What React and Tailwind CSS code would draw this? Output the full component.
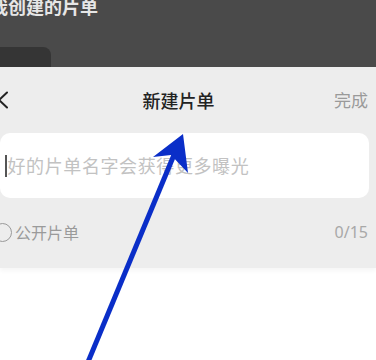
export default function App() {
  return (
    <div className="relative w-[376px] h-[360px] overflow-hidden bg-white" style={{ fontFamily: '"Noto Sans CJK SC", "Noto Sans", sans-serif' }}>
      {/* dimmed page behind the sheet */}
      <div className="h-[67px] bg-[#4a4a4a] flex flex-col">
        <div className="ml-[-10px] mt-[-5px] text-[18px] leading-[22px] font-bold text-[#e6e6e6]">我创建的片单</div>
        <div className="mt-auto w-[51px] h-[20px] bg-[#353535] rounded-tr-[8px]"></div>
      </div>

      {/* sheet */}
      <div className="h-[201px] bg-[#ededed] flex flex-col shadow-[0_3px_4px_rgba(0,0,0,0.04)]">
        <div className="h-[66px] flex items-center justify-between pr-[8px]">
          <svg width="14" height="18" viewBox="0 0 14 18" className="ml-[-5px]">
            <path d="M12 1.5 L4 9 L12 16.5" fill="none" stroke="#222" strokeWidth="2" strokeLinecap="round" strokeLinejoin="round" />
          </svg>
          <div className="text-[18px] font-medium text-[#222] ml-[14px]">新建片单</div>
          <div className="text-[17px] text-[#9a9a9a]">完成</div>
        </div>
        <div className="mr-[7px] h-[65px] bg-white rounded-[10px] flex items-center pl-[5px]">
          <div className="w-[1.5px] h-[22px] bg-[#555]"></div>
          <div className="ml-[1px] text-[18px] tracking-[0.6px] text-[#c2c2c2]">好的片单名字会获得更多曝光</div>
        </div>
        <div className="flex items-center justify-between mt-[22px] pr-[8px]">
          <div className="flex items-center">
            <div className="ml-[-7px] w-[19px] h-[19px] rounded-full border-[1.5px] border-[#9a9a9a]"></div>
            <div className="ml-[3px] text-[16px] text-[#9a9a9a]">公开片单</div>
          </div>
          <div className="text-[16px] text-[#a8a8a8]" style={{ fontFamily: '"Noto Sans", sans-serif' }}>0/15</div>
        </div>
      </div>

      {/* annotation arrow */}
      <svg className="absolute left-0 top-0" width="376" height="360" viewBox="0 0 376 360">
        <line x1="88" y1="362" x2="176" y2="150" stroke="#0a2ec8" strokeWidth="5" />
        <polygon points="183,134 153,157 171,155 188,173" fill="#0a2ec8" />
      </svg>
    </div>
  );
}
